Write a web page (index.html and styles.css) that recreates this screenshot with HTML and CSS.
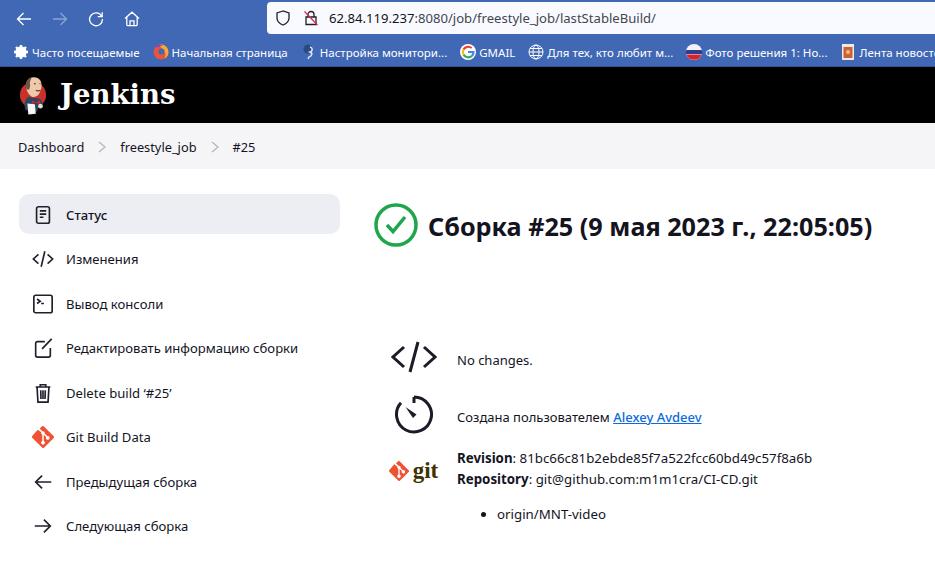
FILE: index.html
```html
<!DOCTYPE HTML>
<html>
    <head>
        <title>Jenkins</title>
        <meta charset="utf-8" />
        <link rel="stylesheet" href="styles.css">
    </head>
    <body>
        <div class="browser">
            <div class="toolbar">
                <div class="nav-icons">
                    <svg class="nav-icon" viewBox="0 0 16 16"><path d="M15 8H1.500M7.500 2 1.500 8l6 6"/></svg>
                    <svg class="nav-icon nav-off" viewBox="0 0 16 16"><path d="M1 8h13.500M8.500 2l6 6-6 6"/></svg>
                    <svg class="nav-icon" viewBox="0 0 16 16"><path d="M13.600 5.200A6.400 6.400 0 1 0 14.400 8M14.200 1.200v4.400H9.800"/></svg>
                    <svg class="nav-icon" viewBox="0 0 16 16"><path d="M1 7.600 8 1.200l7 6.400M2.800 6.200v7.200a1.200 1.200 0 0 0 1.200 1.200h8a1.200 1.200 0 0 0 1.200-1.200V6.200M6 14.600V9.800h4v4.800"/></svg>
                </div>
                <div class="urlbar">
                    <svg class="url-icon" viewBox="0 0 16 16"><path d="M8 1 2 3v5c0 3.500 2.600 5.700 6 7 3.400-1.300 6-3.500 6-7V3z"/></svg>
                    <svg class="url-icon url-lock" viewBox="0 0 16 16"><path d="M5 7V4.500a3 3 0 0 1 6 0V7M3 7h10v7.500H3z"/><path class="lock-slash" d="M1.500 1.500l13 13.500"/></svg>
                    <span class="url-text">62.84.119.237<span class="url-dim">:8080/job/freestyle_job/lastStableBuild/</span></span>
                </div>
            </div>
            <div class="bookmarks">
                <div class="bookmark">
                    <svg class="bm-icon" viewBox="0 0 16 16"><circle cx="8" cy="8" r="4.200" fill="none" stroke="#fff" stroke-width="3"/><path d="M8 1v14M1 8h14M3 3l10 10M13 3 3 13" stroke="#fff" stroke-width="2.400"/></svg>
                    Часто посещаемые
                </div>
                <div class="bookmark">
                    <svg class="bm-icon" viewBox="0 0 16 16"><circle cx="8" cy="8" r="7.500" fill="#e8553d"/><path d="M8 .500a7.500 7.500 0 0 1 7.500 7.500 7.500 7.500 0 0 1-4 6.600C13.500 11 12.500 8 10 6 9 4 7 3 6 1z" fill="#ffa436"/><circle cx="8.500" cy="7.500" r="3" fill="#4068b5"/><path d="M2 3.500 5 1h5L6 3z" fill="#8a3fd0"/></svg>
                    Начальная страница
                </div>
                <div class="bookmark">
                    <svg class="bm-icon" viewBox="0 0 16 16"><circle cx="7" cy="5" r="4.500" fill="#2a4a80"/><path d="M9 3c3 1 3 4 0 5 3 1 2 4-1 5l-1 2" fill="none" stroke="#dfe6f2" stroke-width="1.500"/></svg>
                    Настройка монитори...
                </div>
                <div class="bookmark">
                    <svg class="bm-icon" viewBox="0 0 16 16"><circle cx="8" cy="8" r="8" fill="#fff"/><path d="M8 8h5.500a5.600 5.600 0 0 1-1.700 4" fill="none" stroke="#4285f4" stroke-width="2.200"/><path d="M11.800 12a5.500 5.500 0 0 1-8.300-1.400" fill="none" stroke="#34a853" stroke-width="2.200"/><path d="M3.500 10.600a5.500 5.500 0 0 1 0-5.200" fill="none" stroke="#fbbc05" stroke-width="2.200"/><path d="M3.500 5.400A5.500 5.500 0 0 1 11.700 4" fill="none" stroke="#ea4335" stroke-width="2.200"/></svg>
                    GMAIL
                </div>
                <div class="bookmark">
                    <svg class="bm-icon" viewBox="0 0 16 16" fill="none" stroke="#fff"><circle cx="8" cy="8" r="7"/><ellipse cx="8" cy="8" rx="3" ry="7"/><path d="M1 8h14M2 4.500h12M2 11.500h12"/></svg>
                    Для тех, кто любит м...
                </div>
                <div class="bookmark">
                    <svg class="bm-icon" viewBox="0 0 16 16"><circle cx="8" cy="8" r="8" fill="#f4f4f8"/><path d="M.3 6h15.400a8 8 0 0 1 .3 4H0a8 8 0 0 1 .3-4z" fill="#2a3f8f"/><path d="M.5 10.500h15A8 8 0 0 1 .5 10.500z" fill="#d8232a"/></svg>
                    Фото решения 1: Но...
                </div>
                <div class="bookmark">
                    <svg class="bm-icon" viewBox="0 0 16 16"><rect x="2" width="12" height="16" fill="#f1e9dc"/><rect x="3.500" y="3" width="9" height="11" fill="#c9603f"/><circle cx="8" cy="8" r="2" fill="#e9c46a"/></svg>
                    Лента новостей
                </div>
            </div>
        </div>

        <header class="jenkins-header">
            <svg class="jenkins-logo" viewBox="0 0 30 42">
                <circle cx="15" cy="21" r="14" fill="#c8322b"/>
                <path d="M7 37c-2-6-1-11 3-14l5 1 7 1c3 2 4 5 3 7l-4 2-2 5z" fill="#2c4660"/>
                <path d="M8 15C6 7 10 2 16 2c6 0 9 5 8 11-1 5-3 9-7 10-4 1-7-3-9-8z" fill="#efc9a8"/>
                <path d="M8 15C6 8 9 3 14 2c-2 3-3 6-2 9l-1 4z" fill="#6b5548"/>
                <path d="M16 9h2M22 9h1M18 16c2 1 3 1 5 0" stroke="#40302a" stroke-width="1.200" fill="none"/>
                <path d="M14 27l4 2 5-3-1 5-4-2-4 2z" fill="#d42a2a"/>
                <path d="M9 30l8 1 1 10-8 1z" fill="#f6f6f6"/>
                <circle cx="23" cy="33" r="2.500" fill="#e6dccd"/>
            </svg>
            <span class="jenkins-name">Jenkins</span>
        </header>

        <nav class="breadcrumbs">
            <span>Dashboard</span>
            <svg class="crumb-sep" viewBox="0 0 8 12"><path d="M1 1l6 5-6 5"/></svg>
            <span>freestyle_job</span>
            <svg class="crumb-sep" viewBox="0 0 8 12"><path d="M1 1l6 5-6 5"/></svg>
            <span>#25</span>
        </nav>

        <div class="page">
            <aside class="side-panel">
                <div class="task task-active">
                    <svg class="task-icon" viewBox="0 0 24 24"><rect x="5" y="3" width="14" height="18" rx="2"/><path d="M8.500 7.500h7M8.500 11h7M8.500 14.500h4"/></svg>
                    Статус
                </div>
                <div class="task">
                    <svg class="task-icon" viewBox="0 0 24 24"><path d="M7 7l-5.500 5L7 17M17 7l5.500 5L17 17M14 3.500 10 20.500"/></svg>
                    Изменения
                </div>
                <div class="task">
                    <svg class="task-icon" viewBox="0 0 24 24"><rect x="2" y="2.500" width="20" height="19" rx="2"/><path d="M5.500 6.500 9 9l-3.500 2.500M10 11.500h3"/></svg>
                    Вывод консоли
                </div>
                <div class="task">
                    <svg class="task-icon" viewBox="0 0 24 24"><path d="M14 5H6a2 2 0 0 0-2 2v13a2 2 0 0 0 2 2h12a2 2 0 0 0 2-2v-8M11 13 21.500 2"/></svg>
                    Редактировать информацию сборки
                </div>
                <div class="task">
                    <svg class="task-icon" viewBox="0 0 24 24"><path d="M4 5.500h16M9 5.500V3h6v2.500M5.500 5.500 6.500 22h11l1-16.500M9.500 9l.3 9.500M12 9v9.500M14.500 9l-.3 9.500"/></svg>
                    Delete build ‘#25’
                </div>
                <div class="task">
                    <svg class="task-icon git-icon" viewBox="0 0 24 24"><path class="git-mark" d="M23.500 11 13 .500a1.600 1.600 0 0 0-2.300 0L8.400 2.800l2.900 2.900a2 2 0 0 1 2.500 2.500l2.800 2.800a2 2 0 1 1-1.200 1.100l-2.600-2.600v6.900a2 2 0 1 1-1.600 0v-7a2 2 0 0 1-1.100-2.600L6.300 4 .5 10.700a1.600 1.600 0 0 0 0 2.300L11 23.500a1.600 1.600 0 0 0 2.300 0L23.500 13.300a1.600 1.600 0 0 0 0-2.300z"/></svg>
                    Git Build Data
                </div>
                <div class="task">
                    <svg class="task-icon" viewBox="0 0 24 24"><path d="M21 12H4M11 5l-7 7 7 7"/></svg>
                    Предыдущая сборка
                </div>
                <div class="task">
                    <svg class="task-icon" viewBox="0 0 24 24"><path d="M3 12h17M13 5l7 7-7 7"/></svg>
                    Следующая сборка
                </div>
            </aside>

            <main class="main-panel">
                <div class="build-title">
                    <svg class="status-icon" viewBox="0 0 44 44"><circle cx="22" cy="22" r="20"/><path d="M13 22l6 6.500L31 14"/></svg>
                    <h1>Сборка #25 (9 мая 2023 г., 22:05:05)</h1>
                </div>

                <div class="summary">
                    <div class="summary-row row-changes">
                        <div class="summary-icon">
                            <svg class="big-icon" viewBox="0 0 46 34"><path d="M13 7 2 17l11 10M33 7l11 10-11 10M27 2l-8 30"/></svg>
                        </div>
                        <div class="summary-text">No changes.</div>
                    </div>
                    <div class="summary-row row-user">
                        <div class="summary-icon">
                            <svg class="big-icon" viewBox="0 0 40 40"><path d="M20 3a17.500 17.500 0 1 1-13 5.800"/><path d="M20 3v6"/><path class="needle" d="M11.500 13l11 7.500-3.500 3.500z"/></svg>
                        </div>
                        <div class="summary-text">Создана пользователем <a class="user-link" href="#">Alexey Avdeev</a></div>
                    </div>
                    <div class="summary-row row-git">
                        <div class="summary-icon">
                            <div class="git-logo">
                                <svg class="git-logo-mark" viewBox="0 0 24 24"><path class="git-mark" d="M23.500 11 13 .500a1.600 1.600 0 0 0-2.300 0L8.400 2.800l2.900 2.900a2 2 0 0 1 2.500 2.500l2.800 2.800a2 2 0 1 1-1.200 1.100l-2.600-2.600v6.900a2 2 0 1 1-1.600 0v-7a2 2 0 0 1-1.100-2.600L6.300 4 .5 10.700a1.600 1.600 0 0 0 0 2.300L11 23.500a1.600 1.600 0 0 0 2.300 0L23.500 13.300a1.600 1.600 0 0 0 0-2.300z"/></svg>
                                <span class="git-word">git</span>
                            </div>
                        </div>
                        <div class="git-info">
                            <div class="git-line"><b>Revision</b>: 81bc66c81b2ebde85f7a522fcc60bd49c57f8a6b</div>
                            <div class="git-line"><b>Repository</b>: git@github.com:m1m1cra/CI-CD.git</div>
                            <ul class="branches">
                                <li>origin/MNT-video</li>
                            </ul>
                        </div>
                    </div>
                </div>
            </main>
        </div>
    </body>
</html>
```

FILE: styles.css
```css
* {
    box-sizing: border-box;
}

html, body {
    height: 563px;
    overflow: hidden;
}

body {
    margin: 0;
    background-color: #fff;
    color: #14141f;
    font-family: 'Noto Sans', 'Open Sans', sans-serif;
    font-size: 13px;
}

/* browser chrome */
.browser {
    background-color: #4068b5;
    height: 67px;
    border-bottom: 1px solid #2f5599;
    overflow: hidden;
}

.toolbar {
    display: flex;
    height: 34px;
    padding-top: 2px;
}

.nav-icons {
    display: flex;
    align-items: center;
    gap: 20px;
    width: 267px;
    padding: 2px 0 0 16px;
}

.nav-icon {
    width: 16px;
    height: 16px;
    fill: none;
    stroke: #fff;
    stroke-width: 1.300;
}

.nav-off {
    opacity: 0.4;
}

.urlbar {
    flex: 1;
    display: flex;
    align-items: center;
    gap: 12px;
    padding-left: 8px;
    background-color: #f9faff;
    border-radius: 4px 0 0 4px;
}

.url-icon {
    width: 16px;
    height: 16px;
    fill: none;
    stroke: #1f1f28;
    stroke-width: 1.300;
}

.lock-slash {
    stroke: #e22850;
}

.url-text {
    margin-left: -2px;
    font-size: 13.100px;
    color: #15141a;
}

.url-dim {
    color: #45454f;
}

.bookmarks {
    display: flex;
    align-items: center;
    gap: 13px;
    height: 32px;
    padding: 4px 0 0 13px;
    white-space: nowrap;
    color: #fff;
    font-size: 11.500px;
}

.bookmark {
    display: flex;
    align-items: center;
    gap: 3px;
}

.bm-icon {
    width: 16px;
    height: 16px;
    flex-shrink: 0;
}

/* jenkins header */
.jenkins-header {
    display: flex;
    align-items: center;
    height: 56px;
    padding-left: 19px;
    background-color: #000;
}

.jenkins-logo {
    width: 28px;
    height: 40px;
}

.jenkins-name {
    margin: 0 0 3px 13px;
    color: #fff;
    font-family: 'DejaVu Serif', serif;
    font-size: 27.500px;
    font-weight: bold;
}

.breadcrumbs {
    display: flex;
    align-items: center;
    gap: 14px;
    height: 46px;
    padding: 2px 0 0 18px;
    background-color: #f5f5f8;
    font-size: 12.800px;
}

.crumb-sep {
    width: 8px;
    height: 12px;
    fill: none;
    stroke: #b4b4c2;
    stroke-width: 1.300;
}

/* page */
.page {
    display: flex;
    padding: 25px 0 0 19px;
}

.side-panel {
    width: 321px;
    flex-shrink: 0;
    display: flex;
    flex-direction: column;
    gap: 4.500px;
}

.task {
    display: flex;
    align-items: center;
    gap: 12px;
    height: 40px;
    padding: 1.800px 0 0 13px;
    border-radius: 10px;
    font-size: 13.100px;
}

.task-active {
    background-color: #edeef3;
    font-weight: 500;
}

.task-icon {
    width: 22px;
    height: 22px;
    flex-shrink: 0;
    fill: none;
    stroke: #20202c;
    stroke-width: 1.800;
}

.git-icon {
    stroke: none;
}

.git-mark {
    fill: #f05133;
    stroke: none;
}

.main-panel {
    margin-left: 34px;
    flex: 1;
}

.build-title {
    display: flex;
    align-items: center;
    gap: 10px;
    margin-top: 9px;
}

.status-icon {
    width: 44px;
    height: 44px;
    fill: none;
    stroke: #1ea64b;
    stroke-width: 3.500;
}

h1 {
    margin: 0;
    padding-top: 2px;
    font-size: 25.200px;
    font-weight: 700;
    line-height: 32px;
}

.summary {
    margin-top: 88px;
}

.summary-row {
    display: flex;
    align-items: center;
}

.row-changes {
    height: 44px;
}

.row-user {
    height: 44px;
    margin-top: 13px;
}

.row-git {
    align-items: flex-start;
    margin-top: 12px;
}

.summary-icon {
    width: 79px;
    margin-right: 4px;
    display: flex;
    justify-content: center;
    flex-shrink: 0;
}

.summary-text {
    padding-top: 6px;
}

.big-icon {
    width: 46px;
    height: 40px;
    fill: none;
    stroke: #1c1c28;
    stroke-width: 3;
}

.needle {
    fill: #1c1c28;
    stroke: none;
}

.user-link {
    color: #0b6bdd;
    font-weight: 500;
}

.git-logo {
    display: flex;
    align-items: center;
    gap: 4px;
    margin-top: 11px;
}

.git-logo-mark {
    width: 20px;
    height: 20px;
}

.git-word {
    color: #413000;
    font-family: 'Liberation Serif', serif;
    font-size: 23px;
    font-weight: bold;
    line-height: 24px;
}

.git-info {
    font-size: 13.300px;
}

.git-line {
    line-height: 21px;
}

.branches {
    margin: 14px 0 0;
    padding-left: 40px;
    line-height: 21px;
}
```
